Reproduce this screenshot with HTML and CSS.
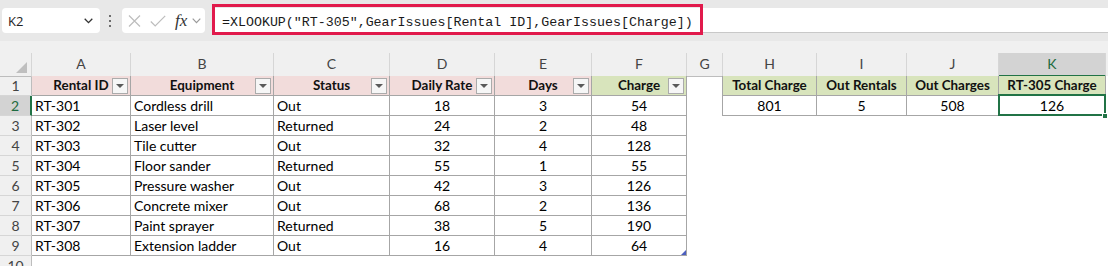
FILE: index.html
```html
<!DOCTYPE html>
<html lang="en">
<head>
  <meta charset="UTF-8">
  <meta name="viewport" content="width=device-width, initial-scale=1.0">
  <title>GearIssues - XLOOKUP</title>
  <link rel="stylesheet" href="styles.css">
</head>
<body>
  <div class="toolbar">
    <div class="namebox">
      <span>K2</span>
      <svg width="9" height="6" viewBox="0 0 9 6"><polyline points="0.7,0.7 4.5,4.6 8.3,0.7" fill="none" stroke="#333" stroke-width="1.3"/></svg>
    </div>
    <div class="dots"><i></i><i></i><i></i></div>
    <div class="fxbox">
      <svg class="ico-x" width="13" height="12" viewBox="0 0 13 12"><path d="M1 0.5 L12 11.5 M12 0.5 L1 11.5" stroke="#bdbdbd" stroke-width="1.2" fill="none"/></svg>
      <svg class="ico-ok" width="16" height="12" viewBox="0 0 16 12"><polyline points="0.8,6.5 5.2,11 15.2,0.8" fill="none" stroke="#bdbdbd" stroke-width="1.2"/></svg>
      <span class="fx">fx</span>
      <svg class="ico-down" width="9" height="6" viewBox="0 0 9 6"><polyline points="0.7,0.7 4.5,4.6 8.3,0.7" fill="none" stroke="#9a9a9a" stroke-width="1.2"/></svg>
    </div>
    <div class="formula">
      <span>=XLOOKUP("RT-305",GearIssues[Rental ID],GearIssues[Charge])</span>
      <div class="mark"></div>
    </div>
  </div>
  <div class="gap"></div>

  <div class="sheet">
    <div class="row head">
      <div class="ch corner"></div>
      <div class="ch">A</div><div class="ch">B</div><div class="ch">C</div><div class="ch">D</div>
      <div class="ch">E</div><div class="ch">F</div><div class="ch">G</div><div class="ch">H</div>
      <div class="ch">I</div><div class="ch">J</div><div class="ch sel">K</div>
    </div>

    <div class="row">
      <div class="rh">1</div>
      <div class="c th pink">Rental ID<span class="filter"></span></div>
      <div class="c th pink">Equipment<span class="filter"></span></div>
      <div class="c th pink">Status<span class="filter"></span></div>
      <div class="c th pink">Daily Rate<span class="filter"></span></div>
      <div class="c th pink">Days<span class="filter"></span></div>
      <div class="c th green">Charge<span class="filter"></span></div>
      <div class="e edge"></div>
      <div class="c th green">Total Charge</div>
      <div class="c th green">Out Rentals</div>
      <div class="c th green">Out Charges</div>
      <div class="c th green">RT-305 Charge</div>
    </div>

    <div class="row">
      <div class="rh sel">2</div>
      <div class="c">RT-301</div><div class="c">Cordless drill</div><div class="c">Out</div>
      <div class="c num">18</div><div class="c num">3</div><div class="c num">54</div>
      <div class="e edge"></div>
      <div class="c num">801</div><div class="c num">5</div><div class="c num">508</div>
      <div class="c num active">126<span class="handle"></span></div>
    </div>

    <div class="row">
      <div class="rh">3</div>
      <div class="c">RT-302</div><div class="c">Laser level</div><div class="c">Returned</div>
      <div class="c num">24</div><div class="c num">2</div><div class="c num">48</div>
    </div>

    <div class="row">
      <div class="rh">4</div>
      <div class="c">RT-303</div><div class="c">Tile cutter</div><div class="c">Out</div>
      <div class="c num">32</div><div class="c num">4</div><div class="c num">128</div>
    </div>

    <div class="row">
      <div class="rh">5</div>
      <div class="c">RT-304</div><div class="c">Floor sander</div><div class="c">Returned</div>
      <div class="c num">55</div><div class="c num">1</div><div class="c num">55</div>
    </div>

    <div class="row">
      <div class="rh">6</div>
      <div class="c">RT-305</div><div class="c">Pressure washer</div><div class="c">Out</div>
      <div class="c num">42</div><div class="c num">3</div><div class="c num">126</div>
    </div>

    <div class="row">
      <div class="rh">7</div>
      <div class="c">RT-306</div><div class="c">Concrete mixer</div><div class="c">Out</div>
      <div class="c num">68</div><div class="c num">2</div><div class="c num">136</div>
    </div>

    <div class="row">
      <div class="rh">8</div>
      <div class="c">RT-307</div><div class="c">Paint sprayer</div><div class="c">Returned</div>
      <div class="c num">38</div><div class="c num">5</div><div class="c num">190</div>
    </div>

    <div class="row">
      <div class="rh">9</div>
      <div class="c">RT-308</div><div class="c">Extension ladder</div><div class="c">Out</div>
      <div class="c num">16</div><div class="c num">4</div><div class="c num table-end">64</div>
    </div>

    <div class="row">
      <div class="rh">10</div>
    </div>
  </div>
</body>
</html>
```

FILE: styles.css
```css
* {
  box-sizing: border-box;
}

body {
  margin: 0;
  width: 1108px;
  height: 266px;
  overflow: hidden;
  background: #fff;
  font-family: Lato, "Liberation Sans", sans-serif;
}

/* formula bar */

.toolbar {
  height: 41px;
  background: #e8e8e8;
  display: flex;
  align-items: flex-start;
  padding-top: 8px;
}

.namebox {
  margin-left: 2px;
  width: 98px;
  height: 25px;
  background: #fff;
  border-radius: 4px;
  display: flex;
  align-items: center;
  justify-content: space-between;
  padding: 0 7px 0 6px;
  font-family: "Open Sans", "Noto Sans", sans-serif;
  font-size: 13px;
  color: #222;
}

.dots {
  width: 20px;
  height: 25px;
  display: flex;
  flex-direction: column;
  align-items: center;
  justify-content: center;
  gap: 3px;
}

.dots i {
  width: 2px;
  height: 2px;
  border-radius: 50%;
  background: #444;
}

.fxbox {
  margin-left: 2px;
  width: 83px;
  height: 25px;
  background: #fff;
  border-radius: 4px;
  display: flex;
  align-items: center;
  padding-left: 6px;
}

.ico-ok {
  margin-left: 9px;
}

.fx {
  margin-left: 9px;
  font-family: "Liberation Serif", serif;
  font-style: italic;
  font-size: 17px;
  color: #333;
  line-height: 1;
}

.ico-down {
  margin-left: 5px;
  margin-top: 1px;
}

.formula {
  position: relative;
  margin-left: 8px;
  flex: 1;
  height: 25px;
  background: #fff;
  border-bottom: 1px solid #c8c8c8;
  padding-left: 9px;
  font-family: "Liberation Mono", monospace;
  font-size: 13.3px;
  line-height: 29px;
  color: #1a1a1a;
  white-space: nowrap;
}

.mark {
  position: absolute;
  left: -1px;
  top: -4px;
  width: 491px;
  height: 31px;
  border: 3px solid #e11a4c;
}

.gap {
  height: 12px;
  background: #f0f0f0;
}

/* grid */

.row {
  display: grid;
  grid-template-columns: 32px 99px 143px 116px 105px 97px 95px 36px 94px 90px 92px 107px;
  height: 20px;
  font-size: 14px;
}

.row.head {
  height: 23px;
  background: #f0f0f0;
}

.ch {
  border-right: 1px solid #d6d6d6;
  border-bottom: 1px solid #bdbdbd;
  text-align: center;
  line-height: 22px;
  color: #444;
}

.ch.sel {
  background: #d3d3d3;
  color: #1d6b40;
  border-bottom: 2px solid #217346;
}

.corner {
  position: relative;
}

.corner::after {
  content: "";
  position: absolute;
  right: 4px;
  bottom: 3px;
  border-left: 11px solid transparent;
  border-bottom: 11px solid #bfbfbf;
}

.rh {
  background: #f0f0f0;
  border-right: 1px solid #bdbdbd;
  border-bottom: 1px solid #d6d6d6;
  text-align: center;
  line-height: 19px;
  color: #444;
}

.rh.sel {
  background: #d3d3d3;
  color: #1d6b40;
  border-right: 2px solid #217346;
}

.c {
  position: relative;
  border-right: 1px solid #a6a6a6;
  border-bottom: 1px solid #a6a6a6;
  padding: 0 3px;
  line-height: 19px;
  color: #000;
  white-space: nowrap;
}

.num {
  text-align: center;
}

.th {
  font-weight: bold;
  font-size: 13.4px;
  text-align: center;
  color: #111;
}

.pink {
  background: #f2dcdb;
}

.green {
  background: #d8e4bc;
}

.edge {
  border-right: 1px solid #a6a6a6;
}

.filter {
  position: absolute;
  right: 2px;
  top: 2px;
  width: 16px;
  height: 16px;
  border: 1px solid #ababab;
  background: #f6f6f6;
}

.filter::after {
  content: "";
  position: absolute;
  left: 3px;
  top: 5px;
  border-left: 4px solid transparent;
  border-right: 4px solid transparent;
  border-top: 4px solid #5a5a5a;
}

.active::after {
  content: "";
  position: absolute;
  left: -1px;
  top: -2px;
  right: -1px;
  bottom: -1px;
  border: 2px solid #217346;
}

.handle {
  position: absolute;
  right: -3px;
  bottom: -4px;
  width: 6px;
  height: 6px;
  background: #217346;
  border: 1px solid #fff;
  z-index: 1;
}

.table-end::after {
  content: "";
  position: absolute;
  right: 0;
  bottom: 0;
  border-left: 5px solid transparent;
  border-bottom: 5px solid #4c5fbf;
}
```
